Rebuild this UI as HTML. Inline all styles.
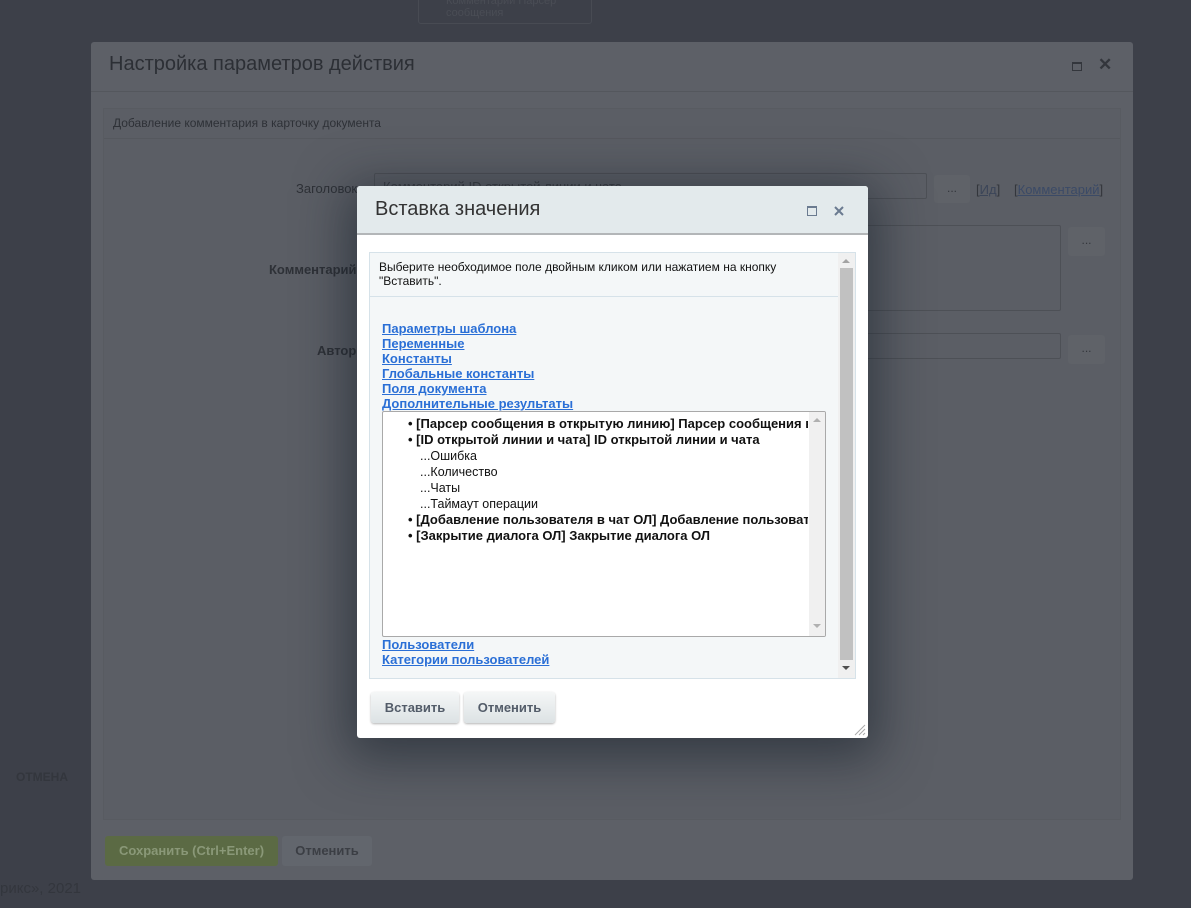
<!DOCTYPE html>
<html><head><meta charset="utf-8"><style>
*{box-sizing:border-box;margin:0;padding:0}
body{width:1191px;height:908px;overflow:hidden;background:#3d4049;font-family:"Liberation Sans",Arial,sans-serif;position:relative}
.a{position:absolute}
.u{text-decoration:underline}
</style></head><body>
<div class="a" style="left:418px;top:-4px;width:174px;height:28px;border:1px solid #484b53;border-radius:3px"></div>
<div class="a" style="left:446px;top:-5px;font-size:11px;color:#4a4d55;line-height:12px">Комментарий Парсер<br>сообщения</div>
<div class="a" style="left:16px;top:770px;font-size:12px;font-weight:bold;color:#33363d">ОТМЕНА</div>
<div class="a" style="left:0;top:880px;font-size:15px;color:#33363d">рикс», 2021</div>

<div class="a" style="left:91px;top:42px;width:1042px;height:838px;background:#5d6067;border-radius:3px"></div>
<div class="a" style="left:91px;top:91px;width:1042px;height:1px;background:#54575d"></div>
<div class="a" style="left:109px;top:53px;font-size:20px;color:#2c2f35">Настройка параметров действия</div>
<div class="a" style="left:1072px;top:62px;width:10px;height:9px;border:1px solid #33363c;border-top-width:2px"></div>
<div class="a" style="left:1098px;top:55px;font-size:17px;color:#33363c;font-weight:bold">✕</div>
<div class="a" style="left:103px;top:108px;width:1018px;height:712px;background:#5b5e65;border:1px solid #585b61"></div>
<div class="a" style="left:104px;top:138px;width:1016px;height:1px;background:#55585e"></div>
<div class="a" style="left:113px;top:116px;font-size:12px;color:#2e3137">Добавление комментария в карточку документа</div>
<div class="a" style="left:296px;top:181px;font-size:13px;color:#2e3137">Заголовок</div>
<div class="a" style="left:269px;top:262px;font-size:13px;font-weight:bold;color:#2e3137">Комментарий</div>
<div class="a" style="left:317px;top:343px;font-size:13px;font-weight:bold;color:#2e3137">Автор</div>
<div class="a" style="left:374px;top:173px;width:553px;height:26px;border:1px solid #4d5056;border-radius:2px;overflow:hidden"><div style="position:absolute;left:8px;top:5px;font-size:13px;color:#3a3d43">Комментарий ID открытой линии и чата</div></div>
<div class="a" style="left:934px;top:175px;width:36px;height:28px;background:#5f6268;border-radius:3px;color:#33363c;text-align:center;font-size:12px;line-height:26px">...</div>
<div class="a" style="left:976px;top:182px;font-size:13px;color:#33363c">[<span class="u" style="color:#3b4558">Ид</span>]</div>
<div class="a" style="left:1014px;top:182px;font-size:13px;color:#33363c">[<span class="u" style="color:#3b4a66">Комментарий</span>]</div>
<div class="a" style="left:840px;top:225px;width:221px;height:86px;border:1px solid #4d5056;border-radius:2px"></div>
<div class="a" style="left:1068px;top:227px;width:37px;height:29px;background:#5f6268;border-radius:3px;color:#33363c;text-align:center;font-size:12px;line-height:27px">...</div>
<div class="a" style="left:840px;top:333px;width:221px;height:26px;border:1px solid #4d5056;border-radius:2px"></div>
<div class="a" style="left:1068px;top:335px;width:37px;height:29px;background:#5f6268;border-radius:3px;color:#33363c;text-align:center;font-size:12px;line-height:27px">...</div>
<div class="a" style="left:105px;top:836px;width:173px;height:30px;background:#5b6a44;border-radius:3px;color:#8a9878;font-size:13px;font-weight:bold;text-align:center;line-height:30px">Сохранить (Ctrl+Enter)</div>
<div class="a" style="left:282px;top:836px;width:90px;height:30px;background:#62666d;border-radius:3px;color:#3b3e44;font-size:13px;font-weight:bold;text-align:center;line-height:30px">Отменить</div>

<div class="a" style="left:357px;top:186px;width:511px;height:552px;background:#fff;border-radius:3px;box-shadow:0 10px 50px 10px rgba(20,30,40,.55);overflow:hidden">
  <div class="a" style="left:0;top:0;width:511px;height:49px;background:#e3eaec;border-bottom:2px solid #b3b6b8"></div>
  <div class="a" style="left:18px;top:12px;font-size:20px;color:#333">Вставка значения</div>
  <div class="a" style="left:450px;top:20px;width:10px;height:10px;border:1px solid #6b7b90;border-top-width:2px"></div>
  <svg class="a" style="left:477px;top:20px" width="10" height="10"><path d="M1 1L9 9M9 1L1 9" stroke="#6b7b90" stroke-width="2"/></svg>
  <div class="a" style="left:12px;top:66px;width:487px;height:427px;background:#f4f7f8;border:1px solid #d6e2e9"></div>
  <div class="a" style="left:22px;top:74px;font-size:12px;color:#111;line-height:14px">Выберите необходимое поле двойным кликом или нажатием на кнопку<br>"Вставить".</div>
  <div class="a" style="left:13px;top:110px;width:468px;height:1px;background:#d6e2e9"></div>
  <div class="a" style="left:481px;top:67px;width:17px;height:425px;background:#f0f0f0"></div>
  <div class="a" style="left:483px;top:82px;width:13px;height:392px;background:#c1c1c1"></div>
  <div class="a" style="left:485px;top:73px;width:0;height:0;border-left:4px solid transparent;border-right:4px solid transparent;border-bottom:4px solid #a3a3a3"></div>
  <div class="a" style="left:485px;top:480px;width:0;height:0;border-left:4px solid transparent;border-right:4px solid transparent;border-top:4px solid #505050"></div>
  <div class="a" style="left:25px;top:135px;font-size:13px;font-weight:bold;color:#2a6fd6;line-height:15px;text-decoration:underline">Параметры шаблона<br>Переменные<br>Константы<br>Глобальные константы<br>Поля документа<br>Дополнительные результаты</div>
  <div class="a" style="left:25px;top:225px;width:444px;height:226px;background:#fff;border:1px solid #a9a9a9;border-radius:2px;overflow:hidden">
    <div class="a" style="left:426px;top:0;width:17px;height:224px;background:#f0f0f0"></div>
    <div class="a" style="left:430px;top:6px;border-left:4px solid transparent;border-right:4px solid transparent;border-bottom:4px solid #b0b0b0"></div>
    <div class="a" style="left:430px;top:212px;border-left:4px solid transparent;border-right:4px solid transparent;border-top:4px solid #b0b0b0"></div>
    <div class="a" style="left:25px;top:4px;width:400px;white-space:nowrap;overflow:hidden;font-size:13px;color:#111;line-height:16px">
      <div style="font-weight:bold">• [Парсер сообщения в открытую линию] Парсер сообщения в открытую линию</div>
      <div style="font-weight:bold">• [ID открытой линии и чата] ID открытой линии и чата</div>
      <div style="font-size:12.5px;padding-left:12px">...Ошибка</div>
      <div style="font-size:12.5px;padding-left:12px">...Количество</div>
      <div style="font-size:12.5px;padding-left:12px">...Чаты</div>
      <div style="font-size:12.5px;padding-left:12px">...Таймаут операции</div>
      <div style="font-weight:bold">• [Добавление пользователя в чат ОЛ] Добавление пользователя в чат ОЛ</div>
      <div style="font-weight:bold">• [Закрытие диалога ОЛ] Закрытие диалога ОЛ</div>
    </div>
  </div>
  <div class="a" style="left:25px;top:451px;font-size:13px;font-weight:bold;color:#2a6fd6;line-height:15px;text-decoration:underline">Пользователи<br>Категории пользователей</div>
  <div class="a" style="left:14px;top:506px;width:88px;height:31px;border-radius:3px;background:linear-gradient(#f5f7f7,#dce2e4);box-shadow:0 1px 2px rgba(0,0,0,.3);font-size:13px;font-weight:bold;color:#535c69;text-align:center;line-height:31px">Вставить</div>
  <div class="a" style="left:107px;top:506px;width:91px;height:31px;border-radius:3px;background:linear-gradient(#f5f7f7,#dce2e4);box-shadow:0 1px 2px rgba(0,0,0,.3);font-size:13px;font-weight:bold;color:#535c69;text-align:center;line-height:31px">Отменить</div>
  <svg class="a" style="left:497px;top:538px" width="12" height="12"><path d="M11 1L1 11M11 5L5 11M11 9L9 11" stroke="#aaa" stroke-width="1"/></svg>
</div>
</body></html>
